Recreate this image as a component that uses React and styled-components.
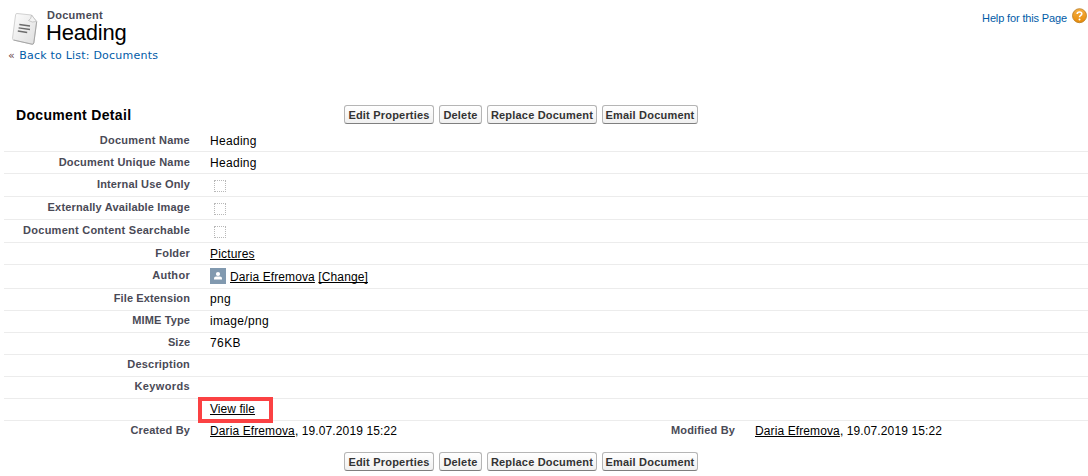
import React from 'react';
import styled, { createGlobalStyle } from 'styled-components';

const Global = createGlobalStyle`
  body {
    margin: 0;
    background: #fff;
    color: #000;
    font: 12px/14px "Liberation Sans", Arial, sans-serif;
  }
`;

const Page = styled.main`
  width: 1088px;
  height: 476px;
  overflow: hidden;
  display: flex;
  flex-direction: column;
`;

const Header = styled.header`
  height: 48px;
  flex: none;
  display: flex;
`;

const DocIcon = styled.svg`
  width: 28px;
  height: 34px;
  margin: 12px 0 0 11px;
`;

const Titles = styled.div`
  margin: 9px 0 0 8px;
  flex: 1;
`;

const PageType = styled.div`
  font-size: 11px;
  font-weight: bold;
  line-height: 13px;
  letter-spacing: 0.27px;
  color: #4a4a56;
`;

const PageTitle = styled.h1`
  margin: -2px 0 0 -1px;
  font-size: 22px;
  font-weight: normal;
  line-height: 25px;
  letter-spacing: -0.2px;
`;

const Help = styled.a`
  display: flex;
  align-items: flex-start;
  gap: 5px;
  padding: 8px 1px 0 0;
  font-size: 11px;
  line-height: 20px;
  letter-spacing: -0.14px;
  color: #015ba7;
`;

const HelpIcon = styled.svg`
  width: 15px;
  height: 16px;
`;

const BackLink = styled.nav`
  height: 57px;
  flex: none;
  padding-left: 8px;
  font: 11px/16px "DejaVu Sans", Verdana, sans-serif;
  letter-spacing: 0.22px;
  color: #015ba7;
`;

const Mark = styled.span`
  margin-right: 0.5px;
  color: #6b4046;
`;

const Bar = styled.div`
  height: ${(p) => p.$height}px;
  flex: none;
  display: flex;
  align-items: flex-start;
`;

const SectionTitle = styled.h2`
  width: 328px;
  box-sizing: border-box;
  margin: 0 0 0 16px;
  font-size: 14px;
  line-height: 20px;
  letter-spacing: 0.33px;
`;

const Buttons = styled.div`
  display: flex;
  gap: 5px;
`;

const Button = styled.button`
  width: ${(p) => p.$width}px;
  height: 19px;
  box-sizing: border-box;
  padding: 1px 0 0;
  border: 1px solid #b5b5b5;
  border-bottom-color: #7f7f7f;
  border-radius: 3px;
  background: linear-gradient(#fff, #f0f0f0);
  font: bold 11px/16px "Liberation Sans", Arial, sans-serif;
  letter-spacing: 0.2px;
  white-space: nowrap;
  color: #333;
`;

const Row = styled.div`
  height: ${(p) => p.$height || 22}px;
  flex: none;
  box-sizing: border-box;
  margin-left: 4px;
  display: flex;
  border-bottom: 1px solid ${(p) => (p.$last ? 'transparent' : '#ececec')};
`;

const Label = styled.div`
  width: 186px;
  flex: none;
  padding-top: ${(p) => (p.$tight ? 2 : 3)}px;
  font-size: 11px;
  font-weight: bold;
  text-align: right;
  white-space: nowrap;
  letter-spacing: ${(p) => p.$spacing || 0}px;
  color: #4a4a56;
`;

const Value = styled.div`
  width: 339px;
  flex: none;
  padding: ${(p) => (p.$tight ? 3 : 4)}px 0 0 20px;
  white-space: nowrap;
  letter-spacing: ${(p) => p.$spacing || 0}px;
`;

const PersonValue = styled(Value)`
  display: flex;
  gap: 4px;
  padding-top: 3px;
  line-height: 18px;
`;

const Link = styled.a`
  text-decoration: underline;
  text-underline-offset: 1px;
  text-decoration-thickness: 1px;
  text-decoration-skip-ink: none;
`;

const Checkbox = styled.div`
  width: 12px;
  height: 12px;
  box-sizing: border-box;
  margin: 2px 0 0 4px;
  border: 1px dotted #b8b8b8;
`;

const Highlight = styled.span`
  position: absolute;
  left: -12px;
  top: -5px;
  width: 75px;
  height: 26px;
  box-sizing: border-box;
  border: 4px solid #fb4143;
`;

const Anchor = styled.span`
  position: relative;
`;

const actions = [
  ['Edit Properties', 90],
  ['Delete', 43],
  ['Replace Document', 110],
  ['Email Document', 96],
];

function Actions() {
  return (
    <Buttons>
      {actions.map(([name, width]) => (
        <Button key={name} $width={width}>{name}</Button>
      ))}
    </Buttons>
  );
}

function Field({ label, spacing, height, tight, children }) {
  return (
    <Row $height={height}>
      <Label $spacing={spacing} $tight={tight}>{label}</Label>
      {children}
    </Row>
  );
}

export default function App() {
  return (
    <Page>
      <Global />
      <Header>
        <DocIcon viewBox="0 0 28 34">
          <defs>
            <linearGradient id="paper" x1="0" y1="0" x2="1" y2="1">
              <stop offset="0" stopColor="#fdfdfd" />
              <stop offset="1" stopColor="#dedede" />
            </linearGradient>
          </defs>
          <path d="M6 1.5 L20.5 3 L25.7 9.5 L22.8 31 Q22.4 32.5 21 32.2 L2.5 28 Q1.3 27.6 1.5 26.3 L4.6 2.8 Q4.8 1.4 6 1.5Z" fill="url(#paper)" stroke="#d2d2d2" />
          <path d="M25.7 9.5 L22.8 31 Q22.4 32.5 21 32.2 L2.5 28" fill="none" stroke="#a6a6a6" />
          <path d="M20.5 3 Q20.5 7 17.5 8.5 Q21 11 25.5 9.5Z" fill="#f4f4f4" stroke="#bcbcbc" strokeWidth=".8" />
          <path d="M8.3 12.5 L19 14 M7.6 15.8 L19 17.5 M6.8 19 L16.2 20.5" stroke="#6c6c6c" strokeWidth="1.3" />
        </DocIcon>
        <Titles>
          <PageType>Document</PageType>
          <PageTitle>Heading</PageTitle>
        </Titles>
        <Help>
          Help for this Page
          <HelpIcon viewBox="0 0 15 16">
            <defs>
              <linearGradient id="orange" x1="0" y1="0" x2="0" y2="1">
                <stop offset="0" stopColor="#f6b044" />
                <stop offset="1" stopColor="#e78b08" />
              </linearGradient>
            </defs>
            <circle cx="7.5" cy="7.7" r="7" fill="url(#orange)" stroke="#b87a20" strokeWidth=".8" />
            <path d="M5.2 6 Q5.2 4 7.5 4 Q9.8 4 9.8 5.8 Q9.8 7 8.5 7.6 Q7.5 8.1 7.5 9.3" fill="none" stroke="#fff" strokeWidth="1.6" />
            <circle cx="7.5" cy="11.4" r="1" fill="#fff" />
          </HelpIcon>
        </Help>
      </Header>
      <BackLink><Mark>«</Mark> Back to List: Documents</BackLink>
      <Bar $height={25}>
        <SectionTitle>Document Detail</SectionTitle>
        <Actions />
      </Bar>
      <Field label="Document Name" spacing={0.27}><Value $spacing={0.3}>Heading</Value></Field>
      <Field label="Document Unique Name" spacing={0.21}><Value $spacing={0.3}>Heading</Value></Field>
      <Field label="Internal Use Only" spacing={0.15} height={23}><Value><Checkbox /></Value></Field>
      <Field label="Externally Available Image" spacing={0.17} height={23}><Value><Checkbox /></Value></Field>
      <Field label="Document Content Searchable" spacing={0.25} height={23}><Value><Checkbox /></Value></Field>
      <Field label="Folder" spacing={0.17}><Value $spacing={0.17}><Link>Pictures</Link></Value></Field>
      <Field label="Author" spacing={0.3} height={24}>
        <PersonValue $spacing={0.11}>
          <svg width="16" height="16" viewBox="0 0 16 16">
            <rect width="16" height="16" fill="#8199af" />
            <circle cx="8" cy="6" r="2.1" fill="#fff" />
            <path d="M4 11.5 V10.2 Q4 8.8 6 8.5 H10 Q12 8.8 12 10.2 V11.5Z" fill="#fff" />
          </svg>
          <span><Link>Daria Efremova</Link> <Link>[Change]</Link></span>
        </PersonValue>
      </Field>
      <Field tight label="File Extension" spacing={0.12}><Value $tight $spacing={0.3}>png</Value></Field>
      <Field tight label="MIME Type" spacing={0.12}><Value $tight $spacing={0.33}>image/png</Value></Field>
      <Field tight label="Size"><Value $tight $spacing={0.4}>76KB</Value></Field>
      <Field tight label="Description" spacing={0.2} />
      <Field tight label="Keywords" spacing={0.37} />
      <Field label="">
        <Value $tight $spacing={0.06}><Anchor><Link>View file</Link><Highlight /></Anchor></Value>
      </Field>
      <Row $last $height={31}>
        <Label $tight $spacing={0.15}>Created By</Label>
        <Value $tight $spacing={0.11}><Link>Daria Efremova</Link>, 19.07.2019 15:22</Value>
        <Label $tight $spacing={0.15}>Modified By</Label>
        <Value $tight $spacing={0.11}><Link>Daria Efremova</Link>, 19.07.2019 15:22</Value>
      </Row>
      <Bar $height={24}>
        <SectionTitle />
        <Actions />
      </Bar>
    </Page>
  );
}
